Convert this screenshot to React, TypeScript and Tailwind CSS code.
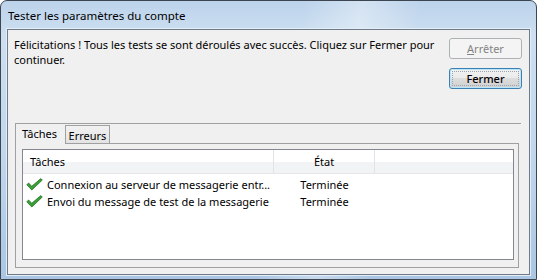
import React from 'react';

function CheckIcon() {
  return (
    <svg width="17" height="13" viewBox="0 0 17 13" className="shrink-0">
      <path
        d="M0.8 6.8 L2.6 5 L5.8 8.2 L14.8 0.6 L16.3 2.1 L5.8 12 Z"
        fill="#38a238"
        stroke="#176317"
        strokeWidth="0.7"
        strokeLinejoin="round"
      />
    </svg>
  );
}

const rows = [
  { task: 'Connexion au serveur de messagerie entr...', state: 'Terminée' },
  { task: 'Envoi du message de test de la messagerie', state: 'Terminée' },
];

export default function App() {
  return (
    <div className="w-[537px] h-[280px] overflow-hidden font-['Noto_Sans',sans-serif] text-[11px] leading-[15px] text-black">
      <div className="flex h-full flex-col rounded-t-[7px] border border-[#3d4650] bg-[linear-gradient(100deg,transparent_52%,rgba(255,255,255,0.35)_62%,transparent_72%),linear-gradient(to_bottom,#bcd3eb,#cddff1_12%,#c1d7ed_55%,#aac6e3)] px-[6px] pb-[4px]">
        {/* Title bar */}
        <div className="flex h-[28px] items-center pl-[1px] text-[11.5px]">Tester les paramètres du compte</div>

        {/* Client area */}
        <div className="flex flex-1 flex-col border border-[#6f7b88] bg-[#f0f0f0] shadow-[0_0_0_1px_#e2edf8]">
          <div className="flex h-[93px] pl-[6px] pr-[7px] pt-[7px]">
            <p className="flex-1 whitespace-nowrap">
              Félicitations ! Tous les tests se sont déroulés avec succès. Cliquez sur Fermer pour
              <br />
              continuer.
            </p>
            <div className="flex shrink-0 flex-col gap-[9px] pt-[1px]">
              <button className="h-[21px] w-[73px] rounded-[3px] border border-[#adb2b5] bg-[#f4f4f4] text-[#838383]">
                <span className="underline">A</span>rrêter
              </button>
              <button className="relative h-[21px] w-[73px] rounded-[3px] border border-[#3c7fb1] bg-[linear-gradient(to_bottom,#f2f2f2,#ebebeb_45%,#dddddd_50%,#cfcfcf)] shadow-[inset_0_0_0_1px_#b9e6fb]">
                <span className="absolute inset-[2px] border border-dotted border-[#9aa4ad]" />
                <span className="relative font-medium">Fermer</span>
              </button>
            </div>
          </div>

          <div className="ml-[7px] mr-[8px] h-px bg-[#a0a0a0]" />

          {/* Tabs */}
          <div className="ml-[7px] mr-[10px] mb-[6px] flex flex-1 flex-col">
            <div className="flex h-[20px] items-end">
              <div className="flex h-[20px] w-[50px] items-center border-l border-[#a0a0a0] pl-[6px] pb-[1px]">Tâches</div>
              <div className="flex h-[19px] w-[45px] items-center justify-center border border-[#a0a0a0] bg-[linear-gradient(to_bottom,#f2f2f2,#e3e3e3)] pt-[1px]">Erreurs</div>
              <div className="h-full flex-1 border-b border-[#a0a0a0]" />
            </div>
            <div className="flex flex-1 flex-col border-x border-b border-[#a0a0a0] pl-[6px] pr-[4px] pt-[5px] pb-[7px]">
              {/* List view */}
              <div className="flex flex-1 flex-col border border-[#828790] bg-white">
                <div className="flex h-[24px] border-b border-[#e3e5e8] bg-[linear-gradient(to_bottom,#ffffff_0%,#ffffff_50%,#f2f3f5_51%,#f2f3f5_100%)]">
                  <div className="flex w-[251px] items-center border-r border-[#e0e3e8] pl-[7px]">Tâches</div>
                  <div className="flex w-[101px] items-center justify-center border-r border-[#e0e3e8]">État</div>
                  <div className="flex-1" />
                </div>
                <div className="pt-[2px]">
                  {rows.map((r, i) => (
                    <div key={i} className="flex h-[17px] items-center">
                      <div className="flex w-[251px] items-center gap-[4px] overflow-hidden whitespace-nowrap pl-[3px]">
                        <CheckIcon />
                        <span>{r.task}</span>
                      </div>
                      <div className="w-[101px] text-center">{r.state}</div>
                    </div>
                  ))}
                </div>
              </div>
            </div>
          </div>
        </div>
      </div>
    </div>
  );
}
